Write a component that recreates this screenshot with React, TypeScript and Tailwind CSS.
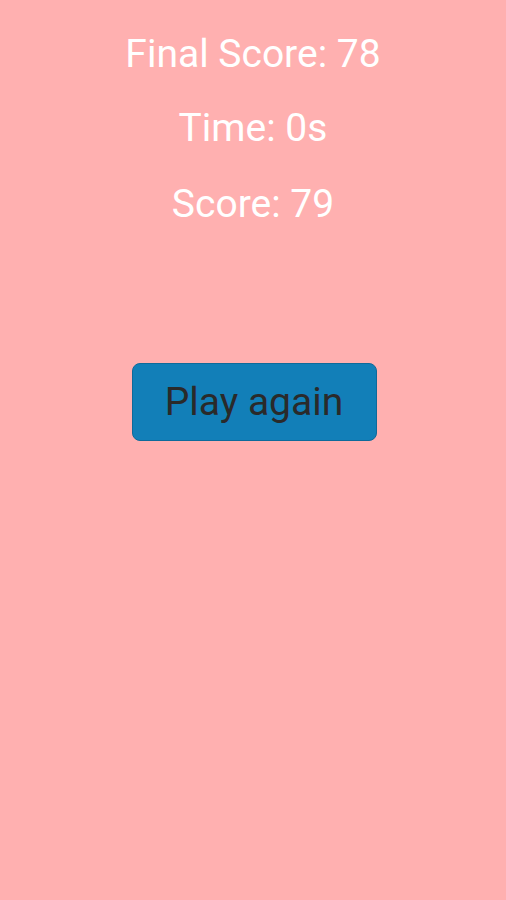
export default function App() {
  return (
    <div className="min-h-[900px] w-full bg-[#ffb0b0] flex flex-col items-center" style={{ fontFamily: "Roboto, sans-serif" }}>
      <div className="mt-[30px] text-[39px] leading-[48px] text-white">Final Score: 78</div>
      <div className="mt-[26px] text-[39px] leading-[48px] text-white">Time: 0s</div>
      <div className="mt-[28px] text-[39px] leading-[48px] text-white">Score: 79</div>
      <button className="mt-[135px] ml-[2px] w-[245px] h-[78px] rounded-[8px] bg-[#127fb8] border border-[#0e6a9a] text-[39px] text-[#2a2a2a]">Play again</button>
    </div>
  );
}
